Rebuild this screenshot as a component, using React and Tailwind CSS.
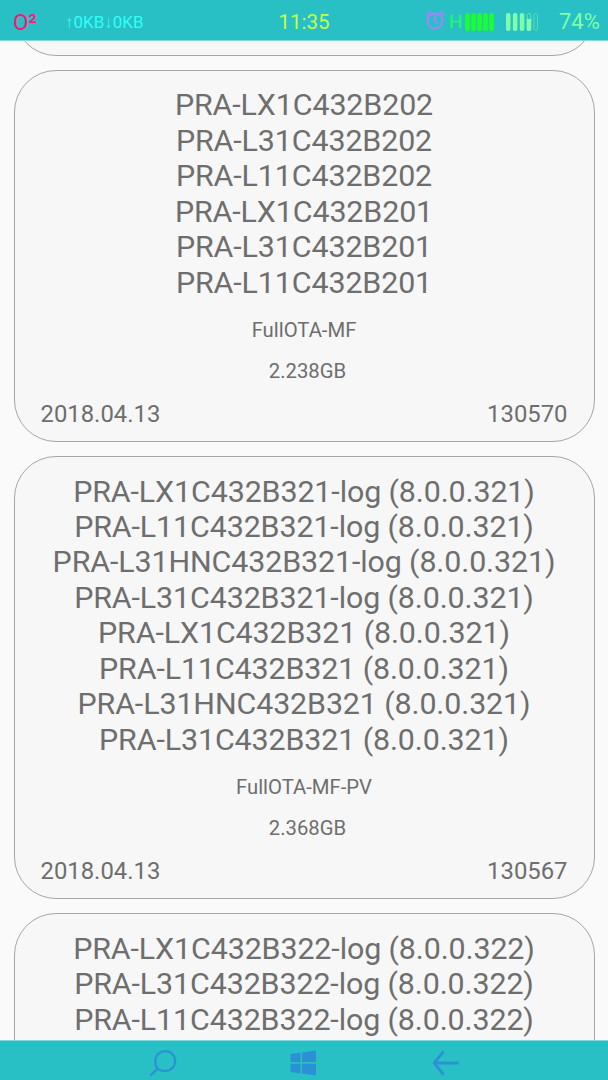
import React from 'react';

const releases = [
  {
    names: [
      'PRA-LX1C432B202',
      'PRA-L31C432B202',
      'PRA-L11C432B202',
      'PRA-LX1C432B201',
      'PRA-L31C432B201',
      'PRA-L11C432B201',
    ],
    type: 'FullOTA-MF',
    size: '2.238GB',
    date: '2018.04.13',
    id: '130570',
  },
  {
    names: [
      'PRA-LX1C432B321-log (8.0.0.321)',
      'PRA-L11C432B321-log (8.0.0.321)',
      'PRA-L31HNC432B321-log (8.0.0.321)',
      'PRA-L31C432B321-log (8.0.0.321)',
      'PRA-LX1C432B321 (8.0.0.321)',
      'PRA-L11C432B321 (8.0.0.321)',
      'PRA-L31HNC432B321 (8.0.0.321)',
      'PRA-L31C432B321 (8.0.0.321)',
    ],
    type: 'FullOTA-MF-PV',
    size: '2.368GB',
    date: '2018.04.13',
    id: '130567',
  },
];

const nextNames = [
  'PRA-LX1C432B322-log (8.0.0.322)',
  'PRA-L31C432B322-log (8.0.0.322)',
  'PRA-L11C432B322-log (8.0.0.322)',
];

function Names({ names }) {
  return (
    <div className="text-center text-[30.4px] leading-[35.46px] tracking-[-0.11px] whitespace-nowrap">
      {names.map((name) => (
        <div key={name}>{name}</div>
      ))}
    </div>
  );
}

function ReleaseCard({ names, type, size, date, id }) {
  return (
    <article className="shrink-0 rounded-[42px] border border-[#a6a6a6] bg-[#f7f7f7] px-[26px] pt-[16.3px] pb-[13.4px]">
      <Names names={names} />
      <div className="mt-[17.8px] text-center text-[20.27px] leading-6">{type}</div>
      <div className="mt-[17px] pl-[7px] text-center text-[20.27px] leading-6">{size}</div>
      <div className="mt-[17px] flex justify-between text-[23.85px] leading-7">
        <span>{date}</span>
        <span>{id}</span>
      </div>
    </article>
  );
}

function AlarmIcon() {
  return (
    <svg className="-mt-[3px] h-5 w-5" viewBox="0 0 20 20" fill="none" stroke="#ac80ff" strokeWidth="1.9">
      <circle cx="10" cy="11" r="7.5" />
      <path d="M10 6.3v5l3 2.6M1 5.2l4.3-3.8M19 5.2l-4.3-3.8" />
    </svg>
  );
}

function SignalBars() {
  return (
    <svg className="h-[18px] w-[29px]" viewBox="0 0 29 18" fill="#1cff2c">
      {[0.2, 6.2, 12.2, 18.2, 24.2].map((x) => (
        <rect key={x} x={x} y="0" width="4.6" height="18" rx="2" />
      ))}
    </svg>
  );
}

function BatteryBars() {
  return (
    <svg className="h-[18px] w-8" viewBox="0 0 32 18" fill="#7dffac">
      {[0, 6.9, 13.8].map((x) => (
        <rect key={x} x={x} y="0" width="4.5" height="18" rx="2" />
      ))}
      <rect x="21.2" y=".5" width="3.5" height="17" rx="1.7" fill="none" stroke="#62e8b6" />
      <path d="M20.7 6h4.5v10a2 2 0 0 1-4.5 0z" />
      <rect x="28" y=".5" width="3.5" height="17" rx="1.7" fill="none" stroke="#54dfba" />
    </svg>
  );
}

function StatusBar() {
  return (
    <header className="grid h-[41px] shrink-0 grid-cols-[278.5px_1fr_183px] items-center border-b border-[#7fdadc] bg-[#28bfc5] leading-6">
      <div className="flex items-center pt-[3px]">
        <span className="ml-[13px] w-[52px] text-[22.5px] text-[#ff1478] [-webkit-text-stroke:0.15px_#ff1478]">O²</span>
        <span className="text-[17px] text-[#2ffff8]">↑0KB↓0KB</span>
      </div>
      <div className="pt-[3px] text-[20.5px] text-[#c4ff48]">11:35</div>
      <div className="flex items-center pt-[3px]">
        <AlarmIcon />
        <span className="ml-[4px] w-[16px] text-[19px] text-[#22f866] [-webkit-text-stroke:0.3px_#22f866]">H</span>
        <SignalBars />
        <span className="ml-[12px] flex"><BatteryBars /></span>
        <span className="ml-[21px] text-[22px] text-[#7dffac]">74%</span>
      </div>
    </header>
  );
}

function NavigationBar() {
  return (
    <nav className="flex h-10 shrink-0 items-start border-t border-[#7fdadc] bg-[#28bfc5] pt-[8px] pl-[149px] text-[#2b91d5]">
      <svg className="h-7 w-7" viewBox="0 0 28 28" fill="none" stroke="currentColor" strokeWidth="2.2">
        <path d="M1.5 26.5 8.5 19.7M8.7 20.2C6.5 17.5 6.2 14 6.2 11.8A10 10 0 1 1 16 22.1c-2.8 0-5.3-.6-7.3-1.9z" />
      </svg>
      <svg className="ml-[113px] h-7 w-7" viewBox="0 0 28 28" fill="currentColor">
        <path d="M.5 5 10.5 3.6v9.3H.5zM12 3.4 26 1.6v11.3H12zM.5 14.8h10v9.7L.5 23zM12 14.8h14v11.8l-14-2z" />
      </svg>
      <svg className="ml-[114px] h-7 w-7" viewBox="0 0 28 28" fill="none" stroke="currentColor" strokeWidth="2.8">
        <path d="M11.5 2.4 2.3 14 11.5 25.6M2.3 14H26.5" />
      </svg>
    </nav>
  );
}

export default function App() {
  return (
    <div className="flex h-[1080px] w-[608px] flex-col overflow-hidden bg-[#fafafa] font-['Roboto',sans-serif] text-[#6e6e6e]">
      <StatusBar />
      <main className="flex min-h-0 flex-1 flex-col gap-[14px] overflow-hidden px-[13.5px]">
        <div className="flex h-[15px] shrink-0 flex-col justify-end overflow-hidden">
          <div className="h-[120px] shrink-0 rounded-[42px] border border-[#a6a6a6] bg-[#f7f7f7]" />
        </div>
        {releases.map((release) => (
          <ReleaseCard key={release.id} {...release} />
        ))}
        <article className="h-[300px] shrink-0 rounded-[42px] border border-[#a6a6a6] bg-[#f7f7f7] px-[26px] pt-[16.3px]">
          <Names names={nextNames} />
        </article>
      </main>
      <NavigationBar />
    </div>
  );
}
